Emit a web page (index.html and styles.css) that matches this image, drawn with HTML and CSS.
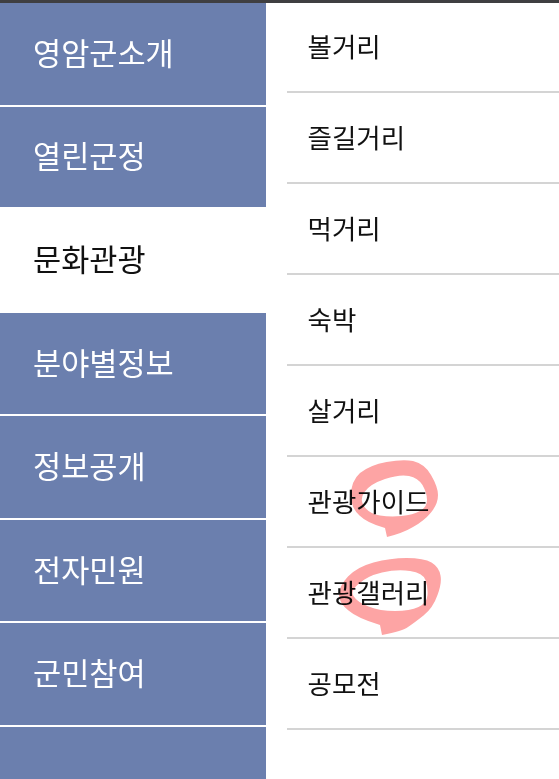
FILE: index.html
```html
<!DOCTYPE html>
<html lang="ko">
<head>
<meta charset="utf-8">
<title>메뉴</title>
<link rel="stylesheet" href="styles.css">
</head>
<body>
<div class="topbar"></div>
<div class="menu">
  <nav class="side">
    <a class="side-item h102">영암군소개</a>
    <a class="side-item h100 noline">열린군정</a>
    <a class="side-item active">문화관광</a>
    <a class="side-item h102">분야별정보</a>
    <a class="side-item h102">정보공개</a>
    <a class="side-item h102">전자민원</a>
    <a class="side-item h102">군민참여</a>
    <a class="side-item rest noline"></a>
  </nav>
  <ul class="sub">
    <li class="sub-first">볼거리</li>
    <li>즐길거리</li>
    <li>먹거리</li>
    <li>숙박</li>
    <li>살거리</li>
    <li>관광가이드</li>
    <li>관광갤러리</li>
    <li>공모전</li>
  </ul>
</div>
<svg class="marks" width="559" height="779" viewBox="0 0 559 779">
  <path class="mark" fill-rule="evenodd" d="M387 537 L385 528 Q367 523 359.5 515.5 Q351 508 351 495.5 Q351 481 360 473 Q370 465 386.5 462 Q403 459 413 461 Q425 464 431 475 Q438 487 438 495 Q438 504 431 512.5 Q424 521 413 527 Q403 533 387 537Z M385 479 Q400 474 409 476 Q418 478 422.5 485 Q427 493 427 500 Q427 507 420 511 Q413 515 401.5 516 Q390 517 380 515.5 Q370 514 364.5 507 Q359 500 364.5 492 Q370 484 385 479Z"/>
  <path class="mark" fill-rule="evenodd" d="M382 635 L380 625 Q357 618 348.5 610.5 Q339 603 339 595 Q339 586 348 576.5 Q357 567 373.5 562.5 Q390 558 406.5 558 Q424 558 431.5 562.5 Q439 567 440.5 575.5 Q442 583 437.5 595 Q433 608 423.5 615.5 Q414 623 408 627 Q403 631 382 635Z M358.5 584 Q367 576 382 572.5 Q397 569 410 571 Q423 573 425.5 580 Q428 587 427.5 595 Q427 603 418.5 607 Q410 611 395 611 Q380 611 368.5 606.5 Q357 602 353.5 596 Q350 591 358.5 584Z"/>
</svg>
</body>
</html>
```
FILE: styles.css
```css
* { box-sizing: border-box; }
html, body { margin: 0; padding: 0; }
body {
  width: 559px;
  height: 779px;
  overflow: hidden;
  position: relative;
  background: #fff;
  font-family: "Noto Sans CJK KR", "Noto Sans", sans-serif;
}
.topbar { height: 3px; background: #3f3f41; }
.menu { display: flex; height: 776px; }
.side { width: 266px; display: flex; flex-direction: column; flex: none; }
.side-item {
  display: flex;
  align-items: center;
  padding-left: 33px;
  padding-bottom: 2px;
  background: #6b7fae;
  color: #fff;
  font-size: 30.6px;
  line-height: 1;
  border-bottom: 2px solid #fff;
}
.h102 { height: 103.5px; }
.h100 { height: 100px; }
.noline { border-bottom: 0; }
.active { height: 106px; background: #fff; color: #111; border-bottom: 0; }
.rest { flex: 1; }
.sub {
  list-style: none;
  margin: 0;
  padding: 0 0 0 21px;
  flex: 1;
}
.sub li {
  height: 91px;
  display: flex;
  align-items: center;
  padding-left: 20.5px;
  color: #111;
  font-size: 26.5px;
  line-height: 1;
  border-bottom: 2px solid #d4d4d4;
}
.sub .sub-first { height: 90px; padding-bottom: 1px; }
.marks { position: absolute; left: 0; top: 0; pointer-events: none; mix-blend-mode: multiply; }
.mark { fill: #fda4a4; }
```
